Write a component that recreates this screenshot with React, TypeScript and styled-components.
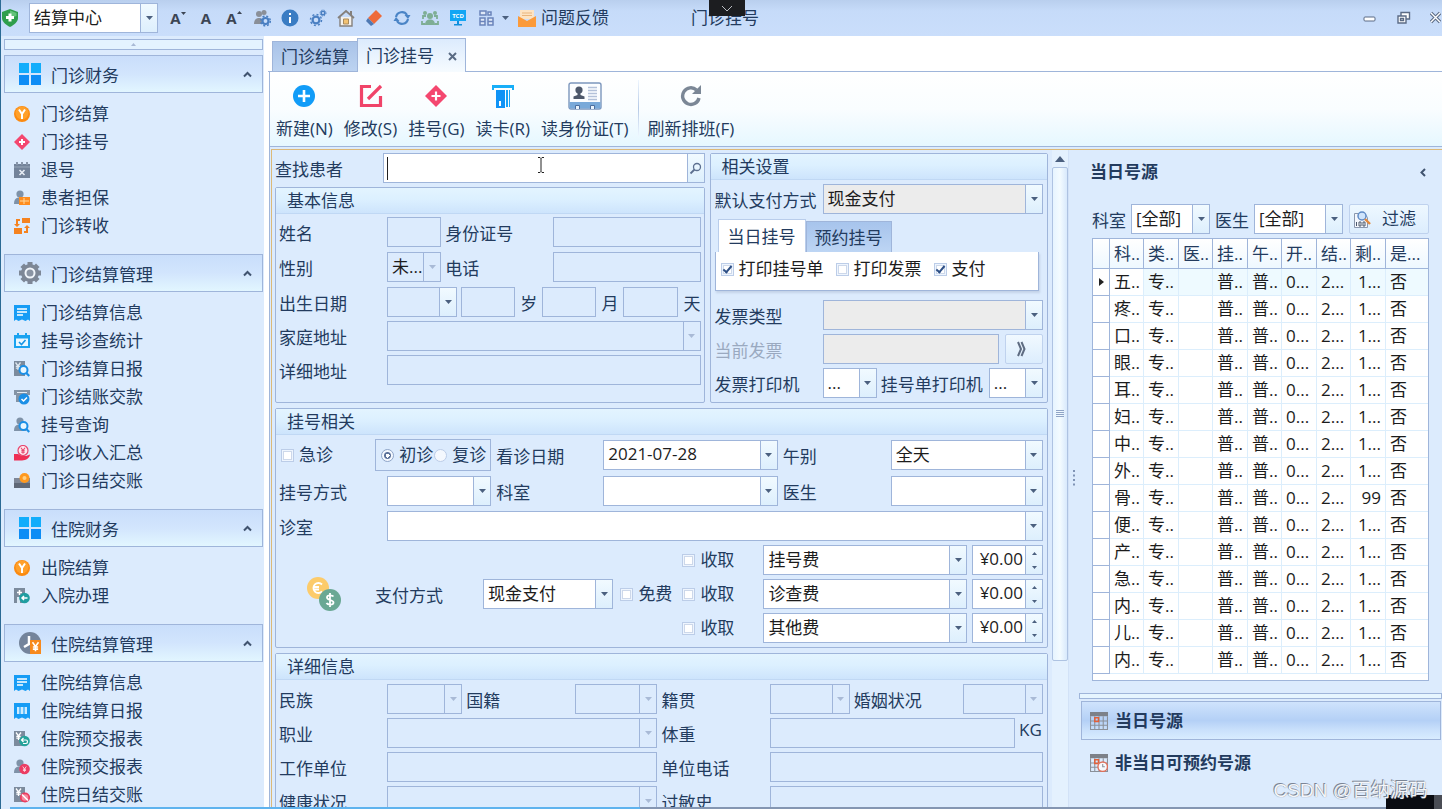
import React, { ReactNode, useId } from "react";
import styled, { createGlobalStyle, css } from "styled-components";

const c = {
  bg: "#dcebfd",
  line: "#9fb5da",
  lineSoft: "#b9cdeb",
  text: "#233b5e",
  ink: "#1c1c1c",
  white: "#ffffff",
};

const Global = createGlobalStyle`
  *, *::before, *::after { box-sizing: border-box; }
  body { margin: 0; background: ${c.bg}; }
  body, button, input, select, table {
    font-family: "Open Sans", "Noto Sans CJK SC", sans-serif;
    font-size: 17px;
    line-height: 24px;
    color: ${c.text};
  }
  button { border: 0; padding: 0; background: none; cursor: pointer; }
  a { color: inherit; text-decoration: none; }
  svg { display: block; flex: none; }
`;

/* ---------- shell ---------- */

const Page = styled.div`
  position: relative;
  display: flex;
  flex-direction: column;
  height: 100vh;
  min-width: 1200px;
  overflow: hidden;
  border-left: 1px solid #2b6a94;
`;

const TopBar = styled.header`
  display: flex;
  align-items: center;
  height: 36px;
  flex: none;
  padding: 0 1px;
  background: linear-gradient(#b9cfee, #c6dbf9 30%, #cadefb);
`;

const CenterSelect = styled.div`
  width: 129px;
  margin: 0 6px 0 11px;
`;

const Tool = styled.button`
  display: flex;
  align-items: center;
  justify-content: center;
  width: 28px;
  height: 28px;
`;

const Letter = styled.span`
  font-size: 15px;
  font-weight: 700;
  color: #3c4554;
`;

const ToolCaret = styled.button`
  display: flex;
  align-items: center;
  justify-content: center;
  width: 10px;
  height: 28px;
`;

const Feedback = styled.button`
  display: flex;
  align-items: center;
  gap: 5px;
  margin-left: 8px;
`;

const Title = styled.div`
  position: relative;
  margin-left: 82px;
  line-height: 36px;
`;

const Notch = styled.button`
  position: absolute;
  top: 0;
  left: 18px;
  display: flex;
  align-items: center;
  justify-content: center;
  width: 36px;
  height: 16px;
  background: #1c1d20;
`;

const WindowButtons = styled.div`
  display: flex;
  gap: 18px;
  margin-left: auto;
`;

const Body = styled.div`
  display: flex;
  flex: 1;
  min-height: 0;
`;

/* ---------- sidebar ---------- */

const Sidebar = styled.nav`
  width: 263px;
  flex: none;
  padding: 3px 1px 0 3px;
  overflow: hidden;
  background: ${c.bg};
`;

const CollapseStrip = styled.button`
  display: flex;
  align-items: center;
  justify-content: center;
  width: 100%;
  height: 11px;
  margin-bottom: 5px;
  border: 1px solid ${c.line};
  background: #e4f3ff;
`;

const GroupHead = styled.button`
  display: flex;
  align-items: center;
  width: 100%;
  height: 38px;
  padding: 0 10px 0 14px;
  border: 1px solid ${c.line};
  background: linear-gradient(#c9defb, #d2e5fd 50%, #e2f6ff);
  text-align: left;
`;

const GroupTitle = styled.span`
  flex: 1;
  padding: 3px 0 0 10px;
`;

const GroupList = styled.ul`
  list-style: none;
  margin: 0;
  padding: 7px 0 14px;
`;

const NavLink = styled.a`
  display: flex;
  align-items: center;
  gap: 11px;
  height: 28px;
  padding-left: 10px;
`;

/* ---------- main area ---------- */

const Main = styled.main`
  display: flex;
  flex: 1;
  flex-direction: column;
  min-width: 0;
  margin-left: 4px;
  background: ${c.white};
  box-shadow: -4px 0 0 ${c.white};
`;

const TabStrip = styled.div`
  display: flex;
  align-items: flex-end;
  height: 36px;
  flex: none;
  padding-left: 4px;
  border-bottom: 1px solid ${c.line};
`;

const PageTab = styled.button<{ $active?: boolean }>`
  display: flex;
  align-items: center;
  gap: 14px;
  height: ${(p) => (p.$active ? 34 : 30)}px;
  padding: 1px 8px 0;
  border: 1px solid ${c.line};
  border-bottom: 0;
  background: ${(p) => (p.$active ? "linear-gradient(#dcebfd, #f6fbff)" : "linear-gradient(#a9c3e8, #bcd3f1)")};
  ${(p) => p.$active && css`
    margin: 0 0 -1px -1px;
  `}
`;

const Ribbon = styled.div`
  display: flex;
  gap: 1px;
  height: 75px;
  flex: none;
  margin-left: 1px;
  padding: 8px 0 0 1px;
  border: solid ${c.line};
  border-width: 0 0 1px 1px;
  background: linear-gradient(#ffffff, #f9fdff 50%, #e6f7ff);
`;

const RibbonButton = styled.button`
  display: flex;
  flex-direction: column;
  align-items: center;
  justify-content: space-between;
  height: 61px;
  padding: 0 5px;
`;

const RibbonIcon = styled.span`
  display: flex;
  align-items: center;
  height: 32px;
`;

const RibbonSplit = styled.div`
  width: 1px;
  height: 56px;
  margin: 0 3px;
  background: linear-gradient(#eef6ff, #b5c9e6, #eef6ff);
`;

const WorkFrame = styled.div`
  display: flex;
  flex: 1;
  min-height: 0;
  margin-left: 1px;
  padding: 2px 0 0 1px;
  border-left: 1px solid ${c.line};
  background: ${c.bg};
`;

const Workspace = styled.div`
  display: flex;
  flex: 1;
  min-width: 0;
  border: solid #dcb978;
  border-width: 1px 0 0 1px;
`;

const FormArea = styled.form`
  display: flex;
  flex: 1;
  flex-direction: column;
  gap: 5px;
  min-width: 0;
  overflow: hidden;
  padding: 3px 4px 0 3px;
`;

const TopColumns = styled.div`
  display: grid;
  grid-template-columns: 429fr 338fr;
  gap: 5px;
`;

const LeftColumn = styled.div`
  display: flex;
  flex-direction: column;
  gap: 4px;
  min-width: 0;
`;

const PanelBox = styled.section`
  flex: 1 0 auto;
  min-width: 0;
  border: 1px solid ${c.line};
  border-radius: 2px;
`;

const PanelTitle = styled.h2`
  margin: 0;
  height: 26px;
  padding: 1px 0 0 11px;
  border-bottom: 1px solid #c0d8f4;
  background: linear-gradient(#e3f4ff, #dcf0ff 45%, #cde4fc);
  font-size: 17px;
  font-weight: 400;
`;

const Grid = styled.div<{ $cols: string; $gap?: number; $pad?: string }>`
  display: grid;
  grid-template-columns: ${(p) => p.$cols};
  row-gap: ${(p) => p.$gap ?? 5}px;
  align-items: center;
  padding: ${(p) => p.$pad ?? "0"};
`;

const Label = styled.label<{ $indent?: number; $muted?: boolean; $center?: boolean }>`
  padding: 3px 0 0 ${(p) => p.$indent ?? 0}px;
  white-space: nowrap;
  text-align: ${(p) => (p.$center ? "center" : "left")};
  color: ${(p) => (p.$muted ? "#9aa9c0" : c.text)};
`;

/* ---------- fields ---------- */

type Tone = "white" | "grey" | "off";
const toneBg = { white: c.white, grey: "#ececec", off: "transparent" };

const Box = styled.div<{ $tone: Tone; $span?: number }>`
  position: relative;
  display: flex;
  height: 30px;
  min-width: 0;
  border: 1px solid ${c.line};
  background: ${(p) => toneBg[p.$tone]};
  ${(p) => p.$span && css`
    grid-column: span ${p.$span};
  `}
`;

const controlCss = css<{ $right?: boolean }>`
  flex: 1;
  width: 0;
  min-width: 0;
  height: 100%;
  margin: 0;
  padding: 0 0 0 4px;
  border: 0;
  border-radius: 0;
  outline: 0;
  background: transparent;
  color: ${c.ink};
  opacity: 1;
  appearance: none;
`;

const Input = styled.input`
  ${controlCss}
  padding: 0 2px 3px 4px;
  text-align: ${(p) => (p.$right ? "right" : "left")};
`;

const Select = styled.select`
  ${controlCss}
`;

const ArrowCell = styled.span<{ $off?: boolean }>`
  display: flex;
  flex: none;
  align-items: center;
  justify-content: center;
  width: 17px;
  border-left: 1px solid ${c.line};
  background: ${(p) => (p.$off ? "transparent" : "linear-gradient(#f1faff, #ddeffd)")};
  pointer-events: none;
`;

const SearchCell = styled.button`
  width: 17px;
  border-left: 1px solid ${c.line};
  background: linear-gradient(#f1faff, #ddeffd);
  display: flex;
  align-items: center;
  justify-content: center;
`;

const TextCaret = styled.span`
  align-self: center;
  width: 1px;
  height: 23px;
  margin-left: 3px;
  background: #222;
`;

const Pointer = styled.span`
  position: absolute;
  top: 3px;
  left: 48%;
`;

const SpinCell = styled.span`
  display: flex;
  flex-direction: column;
  width: 17px;
  border-left: 1px solid ${c.line};
  background: linear-gradient(#f1faff, #ddeffd);
`;

const SpinButton = styled.button`
  display: flex;
  flex: 1;
  align-items: center;
  justify-content: center;
`;

const Check = styled.label<{ $dark?: boolean; $pad?: number }>`
  display: inline-flex;
  align-items: center;
  gap: 5px;
  padding-left: ${(p) => p.$pad ?? 0}px;
  white-space: nowrap;
  color: ${(p) => (p.$dark ? c.ink : c.text)};
`;

const Tick = styled.input`
  position: relative;
  appearance: none;
  flex: none;
  width: 13px;
  height: 13px;
  margin: 0;
  border: 1px solid #bccde8;
  background: #eef5fe;
  &::before {
    content: "";
    position: absolute;
    inset: 1px;
    border: 1px solid #cdd8ea;
    background: #fff;
  }
  &:checked::after {
    content: "";
    position: absolute;
    left: 3px;
    top: 0;
    width: 5px;
    height: 9px;
    border: solid #2d4f86;
    border-width: 0 2px 2px 0;
    transform: rotate(40deg);
  }
`;

const RadioBox = styled.div`
  display: flex;
  align-items: center;
  justify-content: flex-end;
  gap: 1px;
  height: 32px;
  margin-left: -12px;
  padding-right: 4px;
  border: 1px solid ${c.line};
`;

const Radio = styled.input`
  appearance: none;
  flex: none;
  width: 13px;
  height: 13px;
  margin: 0;
  border: 1px solid #bccde8;
  border-radius: 50%;
  background: #f4f8fe;
  &:checked {
    border: 1px solid #8fa5c8;
    background: radial-gradient(circle, #fff 2px, #5b7199 2px, #5b7199 3px, #f4f8fe 4px);
  }
`;

const SettingTabs = styled.div`
  display: flex;
  align-items: flex-end;
  height: 33px;
  margin-top: 5px;
  padding-left: 3px;
`;

const SettingTab = styled.button<{ $active?: boolean }>`
  height: ${(p) => (p.$active ? 33 : 31)}px;
  padding: 2px 8px 0;
  border: 1px solid ${c.line};
  border-bottom: 0;
  background: ${(p) => (p.$active ? c.white : "linear-gradient(#a7c4ec, #bdd5f4)")};
  ${(p) => p.$active && css`
    padding: 2px 9px 0;
    border-color: ${c.lineSoft};
  `}
`;

const SettingBody = styled.div`
  display: flex;
  gap: 12px;
  height: 39px;
  margin: 0 4px 9px 0;
  padding: 5px 0 0 5px;
  align-items: flex-start;
  border: solid ${c.line};
  border-width: 0 1px 1px;
  background: ${c.white};
  box-shadow: 1px 2px 2px #c3d2e8;
`;

const SettingPad = styled.div`
  padding: 4px 4px 0;
`;

const MoreButton = styled.button`
  display: flex;
  align-items: center;
  justify-content: center;
  height: 30px;
  margin-left: 6px;
  padding-right: 6px;
  border: 1px solid #bfd2ee;
  border-radius: 2px;
  background: linear-gradient(#f1f9ff, #dcedfd);
`;

const CoinCell = styled.div`
  margin: -2px 0;
  padding-left: 28px;
`;

const SpinWrap = styled.div`
  margin-left: 5px;
`;

const WeightRow = styled.div`
  display: grid;
  grid-column: span 3;
  grid-template-columns: 1fr 28px;
  align-items: start;
  white-space: nowrap;
`;

const Unit = styled.span`
  padding-left: 4px;
`;

/* ---------- scrollbar & splitter ---------- */

const ScrollBar = styled.div`
  display: flex;
  flex-direction: column;
  align-items: center;
  width: 17px;
  flex: none;
  padding-top: 6px;
  border-right: 1px solid #d2e2f7;
  background: #e4f1fe;
`;

const Thumb = styled.div`
  display: flex;
  align-items: center;
  justify-content: center;
  width: 16px;
  height: 494px;
  margin-top: 5px;
  border: 1px solid #aec3e2;
  border-radius: 2px;
  background: linear-gradient(90deg, #e6f4ff, #f3fbff 50%, #d8e9fc);
`;

const Splitter = styled.div`
  display: flex;
  align-items: center;
  justify-content: center;
  width: 10px;
  flex: none;
`;

/* ---------- right panel ---------- */

const Aside = styled.aside`
  display: flex;
  flex-direction: column;
  width: 363px;
  flex: none;
`;

const AsideHead = styled.div`
  display: flex;
  align-items: center;
  justify-content: space-between;
  height: 44px;
  padding: 0 16px 0 11px;
`;

const AsideTitle = styled.h2`
  margin: 0;
  font-size: 17px;
  font-weight: 700;
`;

const Filters = styled.div`
  display: grid;
  grid-template-columns: 39px 79px 44px 89px 80px;
  align-items: center;
  padding: 10px 13px 4px;
`;

const FilterButton = styled.button`
  display: flex;
  align-items: center;
  gap: 11px;
  height: 30px;
  width: 80px;
  margin-left: 6px;
  padding-left: 4px;
  border: 1px solid #bfd2ee;
  border-radius: 2px;
  background: linear-gradient(#eef8ff, #dcedfd);
`;

const TableBox = styled.div`
  height: 443px;
  margin: 0 13px;
  border: 1px solid ${c.line};
  background: ${c.white};
`;

const Table = styled.table`
  width: 100%;
  table-layout: fixed;
  border-collapse: separate;
  border-spacing: 0;
  color: ${c.ink};
  th, td {
    height: 27px;
    padding: 0 0 0 4px;
    border-right: 1px solid #dceefc;
    border-bottom: 1px solid #dceefc;
    font-weight: 400;
    text-align: left;
    white-space: nowrap;
    overflow: hidden;
  }
  thead th {
    height: 30px;
    border-color: ${c.line};
    background: linear-gradient(#ffffff, #eef8ff);
    color: ${c.text};
  }
  thead th:last-child, td:last-child { border-right: 0; }
  tbody th { padding: 0 0 0 6px; border-color: ${c.line}; }
  tbody tr:first-child td { background: #eefaff; }
  tbody tr:first-child td:nth-child(2) { background: #fff; }
  td:nth-child(9) { padding-right: 4px; text-align: right; }
`;

const NavSplit = styled.div`
  height: 6px;
  margin: 12px 0 2px;
  border: 1px solid ${c.line};
  background: #e6f5ff;
`;

const AsideNav = styled.button<{ $active?: boolean }>`
  display: flex;
  align-items: center;
  gap: 7px;
  height: 39px;
  margin: 0 1px 3px 2px;
  padding-left: 8px;
  border: 1px solid ${(p) => (p.$active ? c.line : "transparent")};
  background: ${(p) => (p.$active ? "linear-gradient(#cfe3fc, #b4d0f6 50%, #c9e0fb 75%, #d8ecff)" : "transparent")};
  font-weight: 700;
`;

const TaskLine = styled.div`
  height: 2px;
  flex: none;
  margin-left: 9px;
  background: linear-gradient(90deg, #5fb3ee 44%, #8496b2 44%);
`;

const CornerBlock = styled.div`
  position: absolute;
  right: 0;
  bottom: 0;
  width: 56px;
  height: 14px;
  border-right: 8px solid #4a4d55;
  background: #0a0c12;
`;

const Watermark = styled.div`
  position: absolute;
  right: 14px;
  bottom: 4px;
  font-family: "Liberation Sans", "Noto Sans CJK SC", sans-serif;
  font-size: 19px;
  line-height: 28px;
  color: #f4f6fa;
  text-shadow: -1px -1px 0 #7b8494, 0 0 1px #6d7686;
`;

/* ---------- icons ---------- */

const Down = ({ off }: { off?: boolean }) => (
  <svg width="7" height="4" viewBox="0 0 7 4"><path d="M0 0h7L3.500 4z" fill={off ? "#a9bad6" : "#4b607f"} /></svg>
);
const Up = ({ size = 5, fill = "#4b607f" }: { size?: number; fill?: string }) => (
  <svg width={size} height={Math.round(size * 0.6)} viewBox="0 0 10 6"><path d="M0 6h10L5 0z" fill={fill} /></svg>
);
const Chevron = () => (
  <svg width="9" height="7" viewBox="0 0 9 7"><path d="M1 5.500 4.500 2 8 5.500" fill="none" stroke="#40536f" strokeWidth="2" /></svg>
);

const Yen = ({ x, y, s = 1, color = "#fff" }: { x: number; y: number; s?: number; color?: string }) => (
  <path d={`M${x - 2.5 * s} ${y - 3.5 * s}L${x} ${y}L${x + 2.5 * s} ${y - 3.5 * s}M${x} ${y}V${y + 4 * s}M${x - 2.2 * s} ${y + 0.4 * s}H${x + 2.2 * s}M${x - 2.2 * s} ${y + 2.2 * s}H${x + 2.2 * s}`} stroke={color} strokeWidth={1.3 * s} fill="none" />
);
const Lens = () => (
  <g><circle cx="9.500" cy="9" r="4" fill="#e8f6ff" stroke="#1b8fe6" strokeWidth="2" /><path d="m12.300 12 3 3" stroke="#1b8fe6" strokeWidth="2.200" /></g>
);
const Person = () => (
  <g fill="#7f92a8"><circle cx="6" cy="4" r="3.600" /><path d="M0 14c0-5 2-6.500 6-6.500S12 9 12 14z" /></g>
);
const Receipt = ({ fill }: { fill: string }) => (
  <path d="M0 0h16v16l-2-1.600-2.500 1.600L8 14.400 4.500 16 2 14.400 0 16z" fill={fill} />
);
const HalfSlip = () => <path d="M0 0h11v15H0z" fill="#7c8b9d" />;

const small: Record<string, ReactNode> = {
  yen: <g><circle cx="8" cy="8" r="8" fill="#fb8a10" /><circle cx="8" cy="7" r="6.500" fill="#ffa02a" /><path d="M5 3.500 8 8l3-4.500M8 8v5" stroke="#fff" strokeWidth="2" fill="none" /></g>,
  diamond: <g><path d="M8 0l8 8-8 8-8-8z" fill="#f4476f" /><path d="M8 5v6M5 8h6" stroke="#fff" strokeWidth="2" /></g>,
  cancel: <g><path d="M0 2h16v14H0z" fill="#73839a" /><path d="M3 0v3M8 0v3M13 0v3" stroke="#8896aa" strokeWidth="2" /><path d="M0 5h16" stroke="#9aa8ba" /><path d="m5.500 8 5 5m0-5-5 5" stroke="#e7edf5" strokeWidth="1.600" /></g>,
  guarantee: <g><Person /><path d="M5 7h11v8H5z" fill="#ff8d1f" /><path d="M6 11h9M10 8v6" stroke="#ffd9a0" /></g>,
  transfer: <g fill="#f5821f"><path d="M8 0h8v5H8zM0 10h8v6H0z" /><path d="M6 1v2H4v3h2l-3 3-3-3h2V1zM10 15v-2h2v-3h-2l3-3 3 3h-2v5z" /></g>,
  receipt: <g><Receipt fill="#169cf5" /><path d="M3 4h10M3 7h10M3 10h6" stroke="#fff" strokeWidth="1.400" /></g>,
  calcheck: <g><path d="M0 2h16v13H0z" fill="#1ba3f0" /><path d="M2 5.500h12V13H2z" fill="#eaf7ff" /><path d="M4 0v3M12 0v3" stroke="#1ba3f0" strokeWidth="2" /><path d="m5 9 2.500 2.500L11.500 7" stroke="#1594e6" strokeWidth="1.600" fill="none" /></g>,
  daily: <g><HalfSlip /><Yen x={4} y={5} color="#dfe8f0" /><Lens /></g>,
  payin: <g><path d="M0 1h16v5H0zM2 6h12v7H2z" fill="#8494a6" /><path d="M3 3.500h10" stroke="#e4ecf4" /><circle cx="10" cy="10" r="5.500" fill="#1b8fe6" /><path d="m7.500 10 2 2 3.500-3.500" stroke="#fff" strokeWidth="1.500" fill="none" /></g>,
  query: <g><Person /><Lens /></g>,
  income: <g><circle cx="9" cy="5.500" r="5" fill="#fde9ef" stroke="#e8476e" strokeWidth="1.200" /><Yen x={9} y={5.500} s={0.800} color="#e8476e" /><path d="M0 9h4l4 2h4l4-1.500c0 3-4 6-8 6H0z" fill="#ee2f55" /></g>,
  settle: <g><path d="M0 5h16v10H0z" fill="#7e8797" /><path d="M0 10h16v5H0z" fill="#5f6877" /><circle cx="10.500" cy="5" r="5" fill="#ff991f" /><circle cx="10.500" cy="5" r="2" fill="#ffd084" /></g>,
  admit: <g><HalfSlip /><path d="M5.500 2v5M3 4.500h5" stroke="#fff" strokeWidth="1.500" /><path d="M3 9h3v6H3z" fill="#dbe8f4" /><circle cx="10.500" cy="10" r="5.300" fill="#1f9da0" /><path d="M13.500 10H8m2-2-2 2 2 2" stroke="#fff" strokeWidth="1.500" fill="none" /></g>,
  barcode: <g><Receipt fill="#169cf5" /><path d="M4 4v7M8 4v7M12 4v7" stroke="#fff" strokeWidth="1.600" /><path d="M6 4v7M10 4v7" stroke="#b9e3ff" /></g>,
  prepay: <g><HalfSlip /><Yen x={4.500} y={5} color="#fff" /><circle cx="10.500" cy="10" r="5.300" fill="#25a39b" /><path d="M8 9h4c2 0 2 3.500 0 3.500H9M9.500 7 7.500 9l2 2" stroke="#fff" strokeWidth="1.200" fill="none" /></g>,
  prepay2: <g><Person /><circle cx="10.500" cy="10" r="5.300" fill="#ec3d63" /><Yen x={10.500} y={10} s={0.700} color="#ffd7e0" /></g>,
  banned: <g><HalfSlip /><Yen x={4.500} y={5} color="#fff" /><circle cx="11" cy="10.500" r="4.200" fill="#f58aa0" stroke="#ea3c5f" strokeWidth="1.800" /><path d="m8 7.500 6 6" stroke="#fff" strokeWidth="1.600" /></g>,
};

const SmallIcon = ({ name }: { name: string }) => <svg width="16" height="16" viewBox="0 0 16 16">{small[name]}</svg>;

const large: Record<string, ReactNode> = {
  tiles: <g><path d="M0 0h10v10H0zM12 0h10v10H12z" fill="#12adfb" /><path d="M0 12h10v10H0zM12 12h10v10H12z" fill="#0d8df5" /></g>,
  gear: (
    <g>
      <g fill="#7d8796">
        <path d="M8.500 0h5v22h-5z" /><path d="M8.500 0h5v22h-5z" transform="rotate(45 11 11)" />
        <path d="M8.500 0h5v22h-5z" transform="rotate(90 11 11)" /><path d="M8.500 0h5v22h-5z" transform="rotate(135 11 11)" />
        <circle cx="11" cy="11" r="9" />
      </g>
      <circle cx="11" cy="11" r="5.500" fill="#f1f5fa" /><circle cx="11" cy="11" r="3.500" fill="#8a94a3" />
    </g>
  ),
  clock: <g><circle cx="11" cy="11" r="11" fill="#74849b" /><path d="M10 4v8l-5 3" stroke="#fff" strokeWidth="2.500" fill="none" /><path d="M11 8h11v14H11z" fill="#f78a1d" /><Yen x={16.500} y={14.500} s={1.200} /></g>,
};

/* ---------- reusable pieces ---------- */

interface FieldProps { id?: string; name?: string; value?: string; tone?: Tone; span?: number }

const Combo = ({ id, name, value = "", tone = "white", span }: FieldProps) => {
  const off = tone === "off";
  return (
    <Box $tone={tone} $span={span}>
      <Select id={id} aria-label={name} defaultValue={value}><option>{value}</option></Select>
      <ArrowCell $off={off}><Down off={off} /></ArrowCell>
    </Box>
  );
};

const DateField = ({ id, value, tone = "white" }: FieldProps) => (
  <Box $tone={tone}>
    <Input id={id} type="text" defaultValue={value} />
    <ArrowCell><Down /></ArrowCell>
  </Box>
);

const Text = ({ id, name, value, tone = "off", span }: FieldProps) => (
  <Box $tone={tone} $span={span}><Input id={id} aria-label={name} type="text" defaultValue={value} /></Box>
);

const Money = ({ name }: { name: string }) => (
  <SpinWrap>
    <Box $tone="white">
      <Input aria-label={name} type="text" defaultValue="¥0.00" $right />
      <SpinCell>
        <SpinButton type="button" aria-label="增加"><Up /></SpinButton>
        <SpinButton type="button" aria-label="减少"><svg width="5" height="3" viewBox="0 0 10 6"><path d="M0 0h10L5 6z" fill="#4b607f" /></svg></SpinButton>
      </SpinCell>
    </Box>
  </SpinWrap>
);

const Labelled = ({ text, indent, muted, children }: { text: string; indent?: number; muted?: boolean; children: (id: string) => ReactNode }) => {
  const id = useId();
  return (
    <>
      <Label htmlFor={id} $indent={indent} $muted={muted}>{text}</Label>
      {children(id)}
    </>
  );
};

/* ---------- data ---------- */

const groups = [
  { title: "门诊财务", icon: "tiles", items: [["yen", "门诊结算"], ["diamond", "门诊挂号"], ["cancel", "退号"], ["guarantee", "患者担保"], ["transfer", "门诊转收"]] },
  { title: "门诊结算管理", icon: "gear", items: [["receipt", "门诊结算信息"], ["calcheck", "挂号诊查统计"], ["daily", "门诊结算日报"], ["payin", "门诊结账交款"], ["query", "挂号查询"], ["income", "门诊收入汇总"], ["settle", "门诊日结交账"]] },
  { title: "住院财务", icon: "tiles", items: [["yen", "出院结算"], ["admit", "入院办理"]] },
  { title: "住院结算管理", icon: "clock", items: [["receipt", "住院结算信息"], ["barcode", "住院结算日报"], ["prepay", "住院预交报表"], ["prepay2", "住院预交报表"], ["banned", "住院日结交账"]] },
];

const ribbon: { text: string; icon: ReactNode }[] = [
  { text: "新建(N)", icon: <svg width="22" height="22" viewBox="0 0 22 22"><circle cx="11" cy="11" r="11" fill="#119cf8" /><path d="M11 5v12M5 11h12" stroke="#fff" strokeWidth="2.600" /></svg> },
  { text: "修改(S)", icon: <svg width="24" height="24" viewBox="0 0 24 24" fill="none" stroke="#f04469" strokeWidth="3.200"><path d="M12 2.500H2.500v19h19V12" /><path d="M9 15 22 2" /></svg> },
  { text: "挂号(G)", icon: <svg width="22" height="22" viewBox="0 0 22 22"><path d="m11 0 11 11-11 11L0 11z" fill="#f4476f" /><path d="M11 6.500v9M6.500 11h9" stroke="#fff" strokeWidth="2.200" /></svg> },
  { text: "读卡(R)", icon: <svg width="22" height="23" viewBox="0 0 22 23"><path d="M0 0h22v5h-2V3H2v2H0z" fill="#18aef8" /><path d="M4 5h9v18H4z" fill="#0f93f6" /><path d="M7 16h2v5H7z" fill="#fff" /><path d="M14 5h2v17h-2zM17 5h1v17h-1z" fill="#18a4f8" /></svg> },
  { text: "读身份证(T)", icon: <svg width="34" height="28" viewBox="0 0 34 28"><rect x="1" y="1" width="32" height="26" rx="2" fill="#fbfdff" stroke="#7c96bd" strokeWidth="1.400" /><path d="M1.500 20h31v6.500h-31z" fill="#79a9d9" /><path d="M7.500 27v-3.500h4V27M22.500 27v-3.500h4V27" fill="#e9f3fc" stroke="#4c6f9f" /><circle cx="11" cy="8" r="3.600" fill="#4d586b" /><path d="M9.500 10h3v3l4 1.500V17h-11v-2.500l4-1.500z" fill="#4d586b" /><path d="M20 5.500h9M20 8.500h9M20 11.500h9M20 14.500h9M20 17.500h9" stroke="#b3c1d9" strokeWidth="1.500" /></svg> },
];

const refreshIcon = (
  <svg width="22" height="22" viewBox="0 0 22 22"><path d="M16.500 5A8.300 8.300 0 1 0 19 13" fill="none" stroke="#7b8796" strokeWidth="3.400" /><path d="M21 0v9h-9z" fill="#7b8796" /></svg>
);

const departments = ["五", "疼", "口", "眼", "耳", "妇", "中", "外", "骨", "便", "产", "急", "内", "儿", "内"];
const heads = ["科..", "类..", "医..", "挂..", "午..", "开..", "结..", "剩..", "是..."];

const CalIcon = ({ clock }: { clock?: boolean }) => (
  <svg width="18" height="18" viewBox="0 0 17 17">
    <path d="M0 0h17v4H0z" fill="#7d8189" />
    <path d="M.5 4v12.500h16V4M0 8.500h17M0 12.500h17M4.500 4v13M8.500 4v13M12.500 4v13" fill="none" stroke="#8b9099" />
    <path d="M4.500 5.500h3.500V9H4.500z" fill="none" stroke="#e2603a" strokeWidth="1.400" />
    {clock && <g><circle cx="12" cy="12" r="4.500" fill="#f6f8fc" stroke="#e0705a" strokeWidth="1.300" /><path d="M12 9.500V12h2" stroke="#8b9099" fill="none" /></g>}
  </svg>
);

const topTools: [string, ReactNode][] = [
  ["用户设置", <svg width="18" height="18" viewBox="0 0 18 18"><g fill="#8a8f98"><circle cx="6" cy="5" r="3" /><circle cx="11" cy="3.500" r="2.500" /><path d="M1 15c0-4 2-6 5-6s4 2 4 6z" /></g><circle cx="12.500" cy="12" r="3" fill="none" stroke="#4a7fc2" strokeWidth="2.200" /><circle cx="12.500" cy="12" r="4.800" fill="none" stroke="#4a7fc2" strokeWidth="1.500" strokeDasharray="2 1.800" /></svg>],
  ["信息", <svg width="18" height="18" viewBox="0 0 18 18"><circle cx="9" cy="9" r="8.500" fill="#3a7cc3" /><path d="M9 4v2M9 8v6" stroke="#fff" strokeWidth="2" /></svg>],
  ["选项", <svg width="18" height="18" viewBox="0 0 18 18" fill="none" stroke="#4a7fc2"><circle cx="7" cy="11" r="3.400" strokeWidth="2.200" /><circle cx="7" cy="11" r="5.500" strokeWidth="1.500" strokeDasharray="2 2.300" /><circle cx="14" cy="4" r="1.800" strokeWidth="1.500" /><circle cx="14" cy="4" r="3" strokeDasharray="1.200 1.200" /></svg>],
  ["主页", <svg width="18" height="18" viewBox="0 0 18 18"><path d="M3 8v9h12V8" fill="#f4f1ec" stroke="#85807c" strokeWidth="1.400" /><path d="M13 2h2v4h-2z" fill="#85807c" /><path d="m1 9 8-7 8 7" fill="none" stroke="#85807c" strokeWidth="1.800" /><path d="M6.500 10h5v5h-5z" fill="#f3c272" stroke="#a98a5c" /></svg>],
  ["清除", <svg width="18" height="18" viewBox="0 0 18 18"><path d="m11 1 6 6-8 8-6-6z" fill="#ee6a3a" /><path d="m3 9 6 6-3 2-5-5z" fill="#4f79b3" /></svg>],
  ["刷新", <svg width="18" height="18" viewBox="0 0 18 18"><path d="M3 8a6 6 0 0 1 11-2M15 10a6 6 0 0 1-11 2" fill="none" stroke="#4a84c6" strokeWidth="2.200" /><path d="M17.500 6h-6L15 10zM.5 12h6L3 8z" fill="#4a84c6" /></svg>],
  ["同步用户", <svg width="18" height="18" viewBox="0 0 18 18"><g fill="#7fae95"><circle cx="9" cy="7" r="3" /><path d="M4 16c0-4 2-5.500 5-5.500s5 1.500 5 5.500z" /><circle cx="4" cy="4" r="2" /><circle cx="14" cy="4" r="2" /></g><path d="M2 10V7h3M16 10V7h-3M1 12v3h3M17 12v3h-3" fill="none" stroke="#7fae95" strokeWidth="1.800" /></svg>],
  ["TCD", <svg width="18" height="18" viewBox="0 0 18 18"><path d="M1 1h16v11H1z" fill="#12a6f4" /><path d="M8 12h2v3h3v1.500H5V15h3z" fill="#0f8edc" /><text x="9" y="9" textAnchor="middle" fontSize="6" fontWeight="700" fill="#fff">TCD</text></svg>],
  ["布局", <svg width="18" height="18" viewBox="0 0 18 18" fill="#dfe8f7" stroke="#6b84bb" strokeWidth="1.500"><path d="M3 2h6v4H3zM3 9h5v7H3zM11 9h5v7h-5z" /><path d="M11 3h3v3h-3z" /><path d="M3 12.500h5M11 12.500h5" /></svg>],
];

/* ---------- page ---------- */

export default function App() {
  return (
    <Page>
      <Global />
      <TopBar>
        <svg width="16" height="18" viewBox="0 0 16 18"><path d="M8 0l8 3v6c0 4-4 7-8 9-4-2-8-5-8-9V3z" fill="#2f9e4c" /><path d="M8 1.500l6.500 2.500v3L8 9z" fill="#63c37a" /><path d="M8 4.500v8M4 8.500h8" stroke="#fff" strokeWidth="3" /></svg>
        <CenterSelect><Combo name="工作中心" value="结算中心" /></CenterSelect>
        <Tool aria-label="减小字号"><Letter>A</Letter><svg width="5" height="16" viewBox="0 0 5 16"><path d="M0 2h5L2.500 5z" fill="#3c4554" /></svg></Tool>
        <Tool aria-label="默认字号"><Letter>A</Letter></Tool>
        <Tool aria-label="增大字号"><Letter>A</Letter><svg width="5" height="16" viewBox="0 0 5 16"><path d="M0 4h5L2.500 1z" fill="#3c4554" /></svg></Tool>
        {topTools.map(([name, icon]) => <Tool key={name} aria-label={name}>{icon}</Tool>)}
        <ToolCaret aria-label="更多布局"><Down /></ToolCaret>
        <Feedback>
          <svg width="18" height="18" viewBox="0 0 18 18"><path d="M2 1h14v9H2z" fill="#fde3c2" /><path d="M4 4h10M4 6.500h10" stroke="#e9b57c" /><path d="M0 7l9 5 9-5v11H0z" fill="#fb9a3a" /></svg>
          问题反馈
        </Feedback>
        <Title>
          门诊挂号
          <Notch aria-label="展开"><svg width="12" height="7" viewBox="0 0 12 7"><path d="m1 1 5 5 5-5" fill="none" stroke="#b9bcc2" /></svg></Notch>
        </Title>
        <WindowButtons>
          <button aria-label="最小化"><svg width="16" height="16" viewBox="0 0 16 16"><rect x="2" y="7" width="11" height="4" rx="1" fill="#fff" stroke="#5b6b85" /></svg></button>
          <button aria-label="还原"><svg width="16" height="16" viewBox="0 0 16 16" fill="#fff" stroke="#5b6b85" strokeWidth="1.400"><path d="M5 2.500h8.500V9H5z" /><path d="M2 6h8v7H2z" /><path d="M4.500 8.500h3v2h-3z" /></svg></button>
          <button aria-label="关闭"><svg width="11" height="16" viewBox="0 0 11 16"><path d="m1 3 9 9M10 3l-9 9" stroke="#5b6b85" strokeWidth="3.400" /><path d="m1 3 9 9M10 3l-9 9" stroke="#fff" strokeWidth="1.400" /></svg></button>
        </WindowButtons>
      </TopBar>

      <Body>
        <Sidebar aria-label="功能导航">
          <CollapseStrip aria-label="向上滚动"><Up fill="#a9bad6" /></CollapseStrip>
          {groups.map((g) => (
            <div key={g.title}>
              <GroupHead>
                <svg width="22" height="22" viewBox="0 0 22 22">{large[g.icon]}</svg>
                <GroupTitle>{g.title}</GroupTitle>
                <Chevron />
              </GroupHead>
              <GroupList>
                {g.items.map(([icon, text], i) => (
                  <li key={i}><NavLink href="#"><SmallIcon name={icon} />{text}</NavLink></li>
                ))}
              </GroupList>
            </div>
          ))}
        </Sidebar>

        <Main>
          <TabStrip>
            <PageTab>门诊结算</PageTab>
            <PageTab $active>
              门诊挂号
              <svg width="9" height="9" viewBox="0 0 9 9"><path d="m1 1 7 7m0-7L1 8" stroke="#5a6b84" strokeWidth="2" /></svg>
            </PageTab>
          </TabStrip>
          <Ribbon>
            {ribbon.map((r) => (
              <RibbonButton key={r.text}><RibbonIcon>{r.icon}</RibbonIcon>{r.text}</RibbonButton>
            ))}
            <RibbonSplit />
            <RibbonButton><RibbonIcon>{refreshIcon}</RibbonIcon>刷新排班(F)</RibbonButton>
          </Ribbon>

          <WorkFrame>
            <Workspace>
              <FormArea onSubmit={(e) => e.preventDefault()}>
                <TopColumns>
                  <LeftColumn>
                    <Grid $cols="108px 1fr">
                      <Labelled text="查找患者">
                        {(id) => (
                          <Box $tone="white">
                            <TextCaret />
                            <Input id={id} type="text" />
                            <SearchCell type="button" aria-label="查找">
                              <svg width="13" height="13" viewBox="0 0 13 13" fill="none" stroke="#5c6f8f"><circle cx="8" cy="5" r="3.500" strokeWidth="1.300" /><path d="m5.500 7.500-4 4" strokeWidth="1.800" /></svg>
                            </SearchCell>
                            <Pointer><svg width="8" height="16" viewBox="0 0 8 16"><path d="M1 .5h2l1 1 1-1h2M4 1.500v13M1 15.500h2l1-1 1 1h2" fill="none" stroke="#222" /></svg></Pointer>
                          </Box>
                        )}
                      </Labelled>
                    </Grid>
                    <PanelBox>
                      <PanelTitle>基本信息</PanelTitle>
                      <Grid $cols="108px 54fr 112px 147fr" $pad="3px 3px 5px">
                        <Labelled text="姓名">{(id) => <Text id={id} />}</Labelled>
                        <Labelled text="身份证号" indent={4}>{(id) => <Text id={id} />}</Labelled>
                        <Labelled text="性别">{(id) => <Combo id={id} value="未..." tone="off" />}</Labelled>
                        <Labelled text="电话" indent={4}>{(id) => <Text id={id} />}</Labelled>
                      </Grid>
                      <Grid $cols="108px 70fr 4px 54fr 27px 54fr 27px 54fr 23px" $pad="0 3px 4px">
                        <Labelled text="出生日期">{(id) => <DateField id={id} tone="off" />}</Labelled>
                        <span />
                        <Text name="岁" />
                        <Label $center>岁</Label>
                        <Text name="月" />
                        <Label $center>月</Label>
                        <Text name="天" />
                        <Label $indent={6}>天</Label>
                      </Grid>
                      <Grid $cols="108px 1fr" $gap={4} $pad="0 3px 17px">
                        <Labelled text="家庭地址">{(id) => <Combo id={id} tone="off" />}</Labelled>
                        <Labelled text="详细地址">{(id) => <Text id={id} />}</Labelled>
                      </Grid>
                    </PanelBox>
                  </LeftColumn>

                  <PanelBox>
                    <PanelTitle>相关设置</PanelTitle>
                    <SettingPad>
                      <Grid $cols="108px 1fr">
                        <Labelled text="默认支付方式">{(id) => <Combo id={id} value="现金支付" tone="grey" />}</Labelled>
                      </Grid>
                      <SettingTabs>
                        <SettingTab type="button" $active>当日挂号</SettingTab>
                        <SettingTab type="button">预约挂号</SettingTab>
                      </SettingTabs>
                      <SettingBody>
                        <Check $dark><Tick type="checkbox" defaultChecked />打印挂号单</Check>
                        <Check $dark><Tick type="checkbox" />打印发票</Check>
                        <Check $dark><Tick type="checkbox" defaultChecked />支付</Check>
                      </SettingBody>
                      <Grid $cols="108px 54fr 112px 54fr">
                        <Labelled text="发票类型">{(id) => <Combo id={id} tone="grey" span={3} />}</Labelled>
                      </Grid>
                      <Grid $cols="108px 1fr 44px" $pad="4px 0">
                        <Labelled text="当前发票" muted>{(id) => <Text id={id} tone="grey" />}</Labelled>
                        <MoreButton type="button" aria-label="更多">
                          <svg width="9" height="16" viewBox="0 0 9 16"><path d="m1 1 3 7-3 7M4.500 1l3 7-3 7" fill="none" stroke="#5f6c82" strokeWidth="2" /></svg>
                        </MoreButton>
                      </Grid>
                      <Grid $cols="108px 54fr 112px 54fr">
                        <Labelled text="发票打印机">{(id) => <Combo id={id} value="..." />}</Labelled>
                        <Labelled text="挂号单打印机" indent={4}>{(id) => <Combo id={id} value="..." />}</Labelled>
                      </Grid>
                    </SettingPad>
                  </PanelBox>
                </TopColumns>

                <PanelBox>
                  <PanelTitle>挂号相关</PanelTitle>
                  <Grid $cols="108px 104fr 112px 174fr 113px 152fr" $pad="4px 4px 4px 3px">
                    <Check $pad={2}><Tick type="checkbox" />急诊</Check>
                    <RadioBox role="radiogroup" aria-label="初诊或复诊">
                      <Check><Radio type="radio" name="visit" defaultChecked />初诊</Check>
                      <Check><Radio type="radio" name="visit" />复诊</Check>
                    </RadioBox>
                    <Labelled text="看诊日期" indent={5}>{(id) => <DateField id={id} value="2021-07-28" />}</Labelled>
                    <Labelled text="午别" indent={5}>{(id) => <Combo id={id} value="全天" />}</Labelled>
                    <Labelled text="挂号方式">{(id) => <Combo id={id} />}</Labelled>
                    <Labelled text="科室" indent={5}>{(id) => <Combo id={id} />}</Labelled>
                    <Labelled text="医生" indent={5}>{(id) => <Combo id={id} />}</Labelled>
                    <Labelled text="诊室">{(id) => <Combo id={id} span={5} />}</Labelled>
                  </Grid>
                  <Grid $cols="96px 108px 130fr 69px 81px 203fr 76px" $gap={4} $pad="0 4px 4px 3px">
                    <span /><span /><span /><span />
                    <Check><Tick type="checkbox" />收取</Check>
                    <Combo name="费用项目一" value="挂号费" />
                    <Money name="挂号费金额" />

                    <CoinCell>
                      <svg width="34" height="34" viewBox="0 0 34 34">
                        <circle cx="11" cy="11" r="11" fill="#fccb6b" />
                        <path d="M15 7.500a5 5 0 1 0 0 7M6 10h6M6 12.500h6" fill="none" stroke="#fff" strokeWidth="1.800" />
                        <circle cx="23" cy="23" r="11" fill="#6aa894" />
                        <path d="M26.500 19.500c-1-1.500-6.500-2-6.500 1s6.500 2 6.500 5-6 2.500-7 .5M23 16v14" fill="none" stroke="#fff" strokeWidth="1.800" />
                      </svg>
                    </CoinCell>
                    <Labelled text="支付方式">{(id) => <Combo id={id} value="现金支付" />}</Labelled>
                    <Check $pad={7}><Tick type="checkbox" />免费</Check>
                    <Check><Tick type="checkbox" />收取</Check>
                    <Combo name="费用项目二" value="诊查费" />
                    <Money name="诊查费金额" />

                    <span /><span /><span /><span />
                    <Check><Tick type="checkbox" />收取</Check>
                    <Combo name="费用项目三" value="其他费" />
                    <Money name="其他费金额" />
                  </Grid>
                </PanelBox>

                <PanelBox>
                  <PanelTitle>详细信息</PanelTitle>
                  <Grid $cols="108px 75fr 113px 82fr 113px 79fr 113px 80fr" $gap={4} $pad="4px 4px 4px 3px">
                    <Labelled text="民族">{(id) => <Combo id={id} tone="off" />}</Labelled>
                    <Labelled text="国籍" indent={4}>{(id) => <Combo id={id} tone="off" />}</Labelled>
                    <Labelled text="籍贯" indent={4}>{(id) => <Combo id={id} tone="off" />}</Labelled>
                    <Labelled text="婚姻状况" indent={4}>{(id) => <Combo id={id} tone="off" />}</Labelled>
                    <Labelled text="职业">{(id) => <Combo id={id} tone="off" span={3} />}</Labelled>
                    <Labelled text="体重" indent={4}>{(id) => (
                      <WeightRow>
                        <Text id={id} />
                        <Unit>KG</Unit>
                      </WeightRow>
                    )}</Labelled>
                    <Labelled text="工作单位">{(id) => <Text id={id} span={3} />}</Labelled>
                    <Labelled text="单位电话" indent={4}>{(id) => <Text id={id} span={3} />}</Labelled>
                    <Labelled text="健康状况">{(id) => <Combo id={id} tone="off" span={3} />}</Labelled>
                    <Labelled text="过敏史" indent={4}>{(id) => <Text id={id} span={3} />}</Labelled>
                  </Grid>
                </PanelBox>
              </FormArea>

              <ScrollBar>
                <Up size={10} />
                <Thumb><svg width="8" height="8" viewBox="0 0 8 8"><path d="M0 .5h8M0 2.500h8M0 4.500h8M0 6.500h8" stroke="#8fa4c6" /></svg></Thumb>
              </ScrollBar>
              <Splitter><svg width="3" height="17" viewBox="0 0 3 17"><path d="M0 1h2M0 5.500h2M0 10h2M0 14.500h2" stroke="#7f93b5" strokeWidth="2" /></svg></Splitter>

              <Aside>
                <AsideHead>
                  <AsideTitle>当日号源</AsideTitle>
                  <button type="button" aria-label="折叠"><svg width="6" height="9" viewBox="0 0 6 9"><path d="M5 1 1.500 4.500 5 8" fill="none" stroke="#40536f" strokeWidth="2" /></svg></button>
                </AsideHead>
                <Filters>
                  <Labelled text="科室">{(id) => <Combo id={id} value="[全部]" />}</Labelled>
                  <Labelled text="医生" indent={5}>{(id) => <Combo id={id} value="[全部]" />}</Labelled>
                  <FilterButton type="button">
                    <svg width="17" height="17" viewBox="0 0 17 17"><path d="M.5 2.500h10l3 4v10H.5z" fill="#f4f7fc" stroke="#8a97ad" /><circle cx="8" cy="5" r="4" fill="#cfe4fb" stroke="#5f8bc6" strokeWidth="1.500" /><path d="m11 8 5 5" stroke="#e48a3c" strokeWidth="2.400" /><path d="M2.500 11v4M5 11h2v4H5zM9 11h2v4H9z" fill="none" stroke="#4d586b" /></svg>
                    过滤
                  </FilterButton>
                </Filters>
                <TableBox>
                  <Table>
                    <colgroup>
                      {[17, 34, 35, 34, 35, 34, 35, 34, 35].map((w, i) => <col key={i} width={w} />)}
                      <col />
                    </colgroup>
                    <thead>
                      <tr><th aria-label="当前行" />{heads.map((h) => <th key={h} scope="col">{h}</th>)}</tr>
                    </thead>
                    <tbody>
                      {departments.map((d, i) => (
                        <tr key={i}>
                          <th>{i === 0 && <svg width="5" height="8" viewBox="0 0 5 8"><path d="M0 0l5 4-5 4z" fill="#222" /></svg>}</th>
                          <td>{d}..</td><td>专..</td><td /><td>普..</td><td>普..</td><td>0...</td><td>2...</td>
                          <td>{d === "骨" ? "99" : "1..."}</td><td>否</td>
                        </tr>
                      ))}
                    </tbody>
                  </Table>
                </TableBox>
                <NavSplit />
                <AsideNav type="button" $active><CalIcon />当日号源</AsideNav>
                <AsideNav type="button"><CalIcon clock />非当日可预约号源</AsideNav>
              </Aside>
            </Workspace>
          </WorkFrame>
        </Main>
      </Body>
      <TaskLine />
      <CornerBlock />
      <Watermark>CSDN @百纳源码</Watermark>
    </Page>
  );
}
